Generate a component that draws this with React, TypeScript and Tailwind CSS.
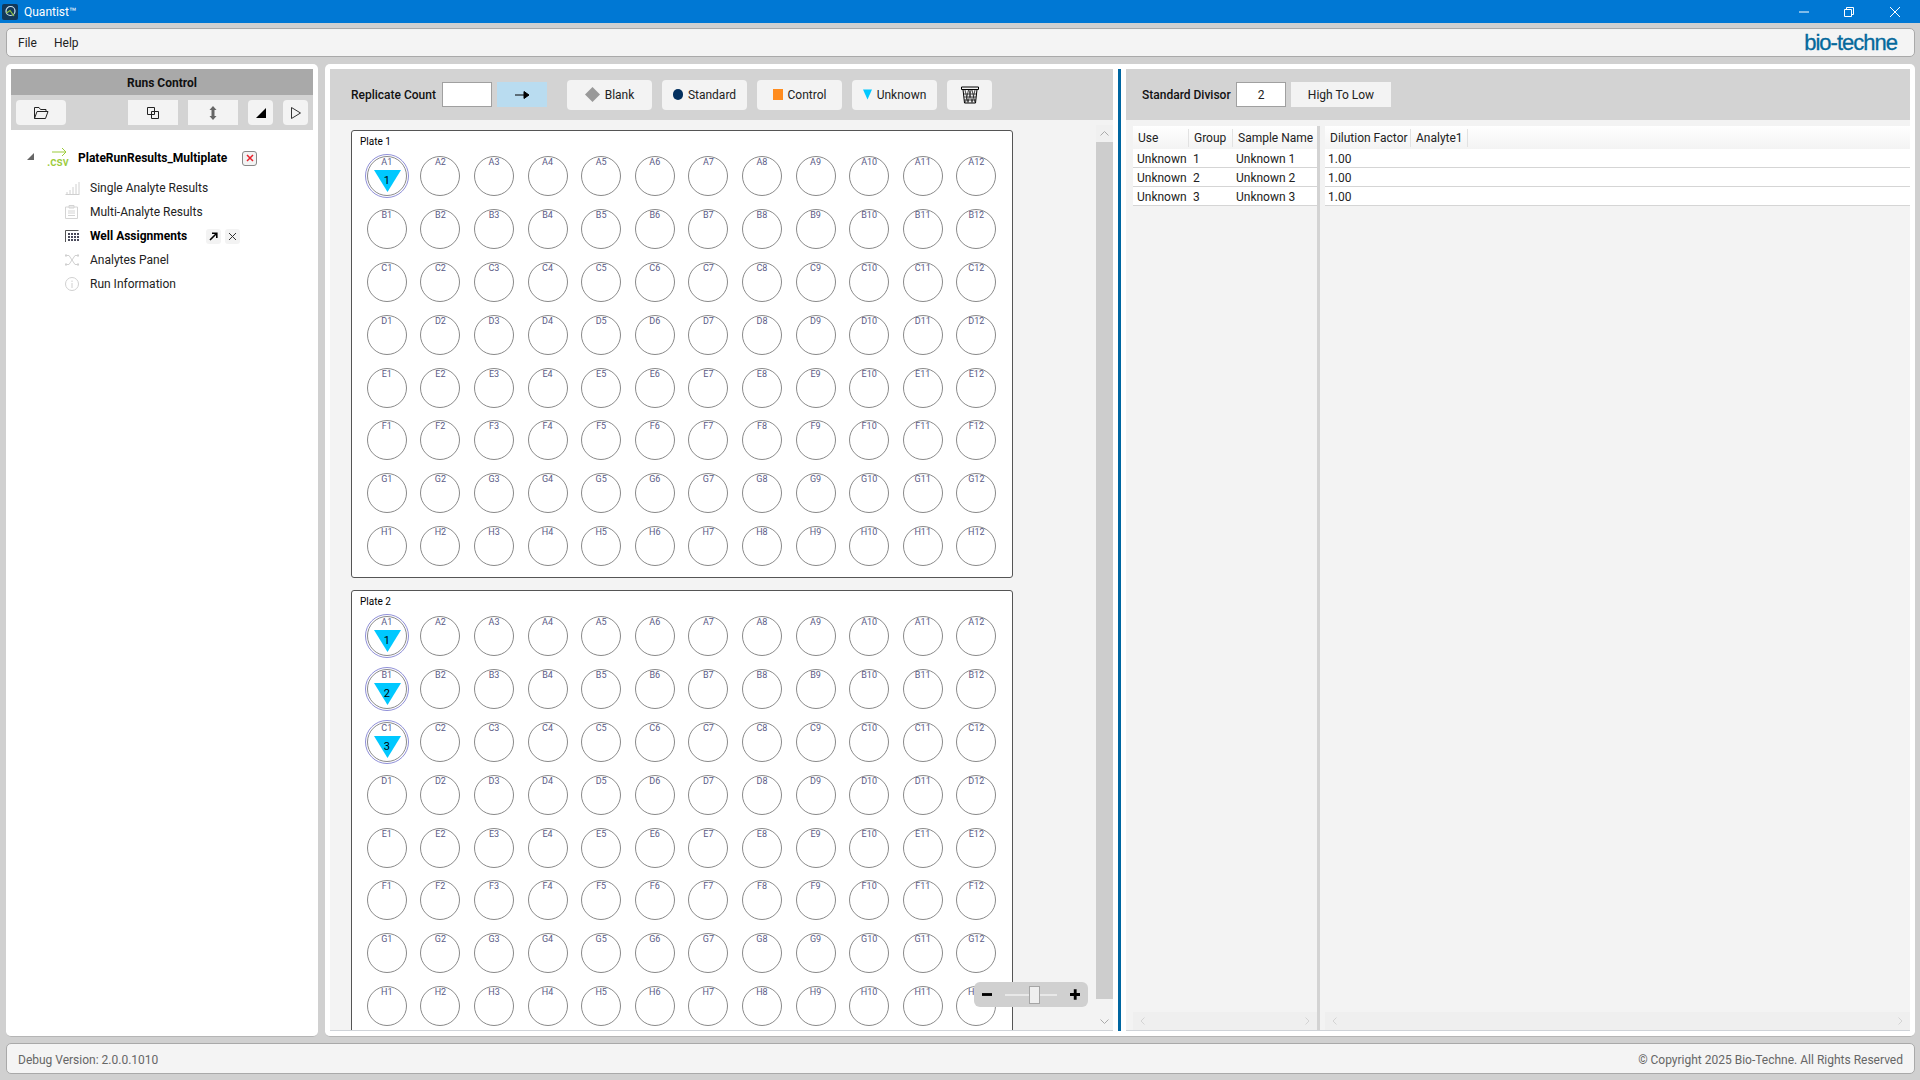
import { Fragment } from "react";

const rows = ["A", "B", "C", "D", "E", "F", "G", "H"];
const cols = [1, 2, 3, 4, 5, 6, 7, 8, 9, 10, 11, 12];

function Well({ label, sample }: { label: string; sample?: number }) {
  return (
    <div className="flex items-center justify-center">
      <div
        className={
          "relative flex h-[44px] w-[44px] items-center justify-center rounded-full border " +
          (sample ? "border-[#8f8fd8]" : "border-transparent")
        }
      >
        <div className="relative h-[40px] w-[40px] rounded-full border border-[#8a8a8a] bg-white">
          <div className="absolute inset-x-0 top-[0px] text-center text-[9px] leading-[11px] text-[#5a5a86]">
            {label}
          </div>
          {sample ? (
            <>
              <svg className="absolute left-[6px] top-[13px]" width="27" height="22" viewBox="0 0 27 22">
                <path d="M0 0H27L13.5 22Z" fill="#00c8ff" />
              </svg>
              <div className="absolute inset-x-0 top-[17px] text-center text-[11px] leading-[14px] text-black">
                {sample}
              </div>
            </>
          ) : null}
        </div>
      </div>
    </div>
  );
}

function Plate({ name, samples }: { name: string; samples: Record<string, number> }) {
  return (
    <div className="h-[448px] w-[662px] shrink-0 rounded-[3px] border border-[#555] bg-white">
      <div className="h-[19px] pl-[8px] pt-[4px] text-[10px] leading-[13px] text-black">{name}</div>
      <div className="ml-[8px] grid grid-cols-[repeat(12,53.6px)] auto-rows-[52.8px]">
        {rows.map((r) => (
          <Fragment key={r}>
            {cols.map((c) => (
              <Well key={r + c} label={r + c} sample={samples[r + c]} />
            ))}
          </Fragment>
        ))}
      </div>
    </div>
  );
}

function TypeButton({ icon, label }: { icon: React.ReactNode; label: string }) {
  return (
    <button className="flex h-[30px] w-[85px] items-center justify-center gap-[5px] rounded-[4px] bg-[#f3f3f3] text-[12px] text-[#222]">
      {icon}
      {label}
    </button>
  );
}

function TreeItem({ icon, label, active }: { icon: React.ReactNode; label: string; active?: boolean }) {
  return (
    <div className="flex h-[24px] items-center">
      <div className="flex w-[25px] justify-start">{icon}</div>
      <span className={active ? "w-[100px] font-bold text-black" : "text-[#222]"}>{label}</span>
      {active ? (
        <div className="ml-[16px] flex gap-[4px]">
          <span className="flex h-[15px] w-[15px] items-center justify-center rounded-[3px] bg-[#f3f3f3]">
            <svg width="9" height="9" viewBox="0 0 9 9">
              <path d="M1 8L7 2M3 1.2H7.8V6" fill="none" stroke="#000" strokeWidth="1.6" />
            </svg>
          </span>
          <span className="flex h-[15px] w-[15px] items-center justify-center rounded-[3px] bg-[#f3f3f3]">
            <svg width="9" height="9" viewBox="0 0 9 9">
              <path d="M1 1L8 8M8 1L1 8" fill="none" stroke="#333" strokeWidth="1" />
            </svg>
          </span>
        </div>
      ) : null}
    </div>
  );
}

function Chevrons() {
  return (
    <>
      <svg width="5" height="8" viewBox="0 0 5 8">
        <path d="M4.5 .5L1 4L4.5 7.5" fill="none" stroke="#d4d4d4" />
      </svg>
      <svg width="5" height="8" viewBox="0 0 5 8">
        <path d="M.5 .5L4 4L.5 7.5" fill="none" stroke="#d4d4d4" />
      </svg>
    </>
  );
}

export default function App() {
  const tableRows = [1, 2, 3];
  return (
    <div
      className="flex h-[1080px] w-[1920px] flex-col overflow-hidden bg-[#d0d0d0] text-[12px]"
      style={{ fontFamily: 'Roboto, "Noto Sans", sans-serif' }}
    >
      {/* title bar */}
      <div className="flex h-[23px] shrink-0 items-center bg-[#0078d4] text-white">
        <div className="ml-[2px] flex h-[16px] w-[16px] items-center justify-center rounded-[2px] bg-[#12395a]">
          <svg width="13" height="13" viewBox="0 0 13 13">
            <circle cx="6.5" cy="6" r="4.5" fill="none" stroke="#cfe3ee" strokeWidth="1.2" />
            <path d="M2.5 8L6 5.5L10 11" fill="none" stroke="#8fc43e" strokeWidth="1.2" />
          </svg>
        </div>
        <span className="ml-[6px]">Quantist™</span>
        <div className="ml-auto flex items-center">
          <svg className="mr-[35px]" width="10" height="10" viewBox="0 0 10 10">
            <path d="M0 5H10" stroke="#fff" />
          </svg>
          <svg className="mr-[36px]" width="10" height="10" viewBox="0 0 10 10">
            <path d="M.5 2.5H7.5V9.5H.5ZM2.5 2.5V.5H9.5V7.5H7.5" fill="none" stroke="#fff" />
          </svg>
          <svg className="mr-[20px]" width="10" height="10" viewBox="0 0 10 10">
            <path d="M0 0L10 10M10 0L0 10" stroke="#fff" />
          </svg>
        </div>
      </div>

      {/* menu */}
      <div className="ml-[6px] mr-[5px] mt-[5px] flex h-[29px] shrink-0 items-center rounded-[5px] border border-[#a9a9a9] bg-[#f4f4f4] pl-[11px] pr-[17px] pt-[1px] text-[#222]">
        <span className="w-[18px]">File</span>
        <span className="ml-[18px]">Help</span>
        <span
          className="ml-auto text-[22px] leading-none tracking-[-1px] text-[#05699c] [-webkit-text-stroke:0.3px_#05699c]"
          style={{ fontFamily: '"Liberation Sans", sans-serif' }}
        >
          bio-techne
        </span>
      </div>

      {/* main */}
      <div className="ml-[6px] mr-[5px] mt-[7px] flex min-h-0 flex-1 gap-[7px]">
        {/* runs control */}
        <div className="w-[312px] shrink-0 rounded-[5px] border-b border-[#b5b5b5] bg-white p-[5px]">
          <div className="flex h-[26px] items-center justify-center bg-[#a9a9a9] pt-[1px] font-bold text-[#111]">Runs Control</div>
          <div className="flex h-[35px] items-center gap-[10px] bg-[#d3d3d3] px-[5px]">
            <button className="flex h-[25px] w-[50px] items-center justify-center rounded-[4px] bg-[#f3f3f3]">
              <svg width="16" height="14" viewBox="0 0 16 14">
                <path d="M1.5 12.5V1.5H6L7.5 3.5H13V5.5M1.5 12.5H12.5L15 5.5H4Z" fill="none" stroke="#222" />
              </svg>
            </button>
            <div className="w-[42px]" />
            <button className="flex h-[25px] w-[50px] items-center justify-center bg-[#f3f3f3]">
              <svg width="12" height="12" viewBox="0 0 12 12">
                <path d="M.5.5H7.5V7.5H.5ZM4.5 4.5H11.5V11.5H4.5Z" fill="none" stroke="#222" />
              </svg>
            </button>
            <button className="flex h-[25px] w-[50px] items-center justify-center bg-[#f3f3f3]">
              <svg width="8" height="14" viewBox="0 0 8 14">
                <path d="M4 0L7.5 4H5.5V10H7.5L4 14L.5 10H2.5V4H.5Z" fill="#666" />
              </svg>
            </button>
            <button className="flex h-[25px] w-[25px] items-center justify-center rounded-[4px] bg-[#f3f3f3]">
              <svg width="10" height="10" viewBox="0 0 10 10">
                <path d="M10 0V10H0Z" fill="#000" />
              </svg>
            </button>
            <button className="flex h-[25px] w-[25px] items-center justify-center rounded-[4px] bg-[#f3f3f3]">
              <svg width="10" height="12" viewBox="0 0 10 12">
                <path d="M.5.5L9.5 6L.5 11.5Z" fill="none" stroke="#333" />
              </svg>
            </button>
          </div>

          {/* tree */}
          <div className="pl-[16px] pt-[13px]">
            <div className="flex h-[30px] items-center">
              <svg className="-mt-[4px]" width="7" height="7" viewBox="0 0 7 7">
                <path d="M7 0V7H0Z" fill="#666" />
              </svg>
              <div className="relative ml-[13px] h-[24px] w-[25px] shrink-0 text-[#9ccb3b]">
                <svg className="absolute left-[5px] top-[1px]" width="15" height="10" viewBox="0 0 15 10">
                  <path d="M0 5H14M10 1L14 5L10 9" fill="none" stroke="#9ccb3b" />
                </svg>
                <span className="absolute left-0 top-[9px] text-[12px] font-medium leading-[14px]">.csv</span>
              </div>
              <span className="ml-[6px] w-[154px] font-bold text-black">PlateRunResults_Multiplate</span>
              <span className="ml-[10px] flex h-[15px] w-[15px] items-center justify-center rounded-[3px] border border-[#888] bg-[#f3f3f3]">
                <svg width="8" height="8" viewBox="0 0 8 8">
                  <path d="M1 1L7 7M7 1L1 7" fill="none" stroke="#e8202a" strokeWidth="1.5" />
                </svg>
              </span>
            </div>
            <div className="ml-[38px] mt-[3px]">
              <TreeItem
                label="Single Analyte Results"
                icon={
                  <svg width="15" height="14" viewBox="0 0 15 14">
                    <path d="M.5 13.5H14.5M2 13V11M5 13V9M8 13V6M11 13V3M14 13V1" fill="none" stroke="#d0d0d0" />
                  </svg>
                }
              />
              <TreeItem
                label="Multi-Analyte Results"
                icon={
                  <svg width="13" height="14" viewBox="0 0 13 14">
                    <path d="M.5 2H12.5V13.5H.5ZM4 .5H9V3H4ZM3 6H10M3 8H10M3 10.5H10" fill="none" stroke="#d4d4d4" />
                  </svg>
                }
              />
              <TreeItem
                active
                label="Well Assignments"
                icon={
                  <svg width="14" height="13" viewBox="0 0 14 13">
                    <path d="M.5 12V.5H13.5" fill="none" stroke="#555" />
                    <path
                      d="M3 3H5V5H3ZM6 3H8V5H6ZM9 3H11V5H9ZM12 3H14V5H12ZM3 6H5V8H3ZM6 6H8V8H6ZM9 6H11V8H9ZM12 6H14V8H12ZM3 9H5V11H3ZM6 9H8V11H6ZM9 9H11V11H9ZM12 9H14V11H12Z"
                      fill="#4a4a5a"
                    />
                  </svg>
                }
              />
              <TreeItem
                label="Analytes Panel"
                icon={
                  <svg width="14" height="14" viewBox="0 0 14 14">
                    <path d="M1 2.5H4L10 11.5H13M1 11.5H4L10 2.5H13" fill="none" stroke="#d0d0d0" />
                    <path d="M0 1.5H2V3.5H0ZM12 1.5H14V3.5H12ZM0 10.5H2V12.5H0ZM12 10.5H14V12.5H12Z" fill="#d0d0d0" />
                  </svg>
                }
              />
              <TreeItem
                label="Run Information"
                icon={
                  <svg width="14" height="14" viewBox="0 0 14 14">
                    <circle cx="7" cy="7" r="6.5" fill="none" stroke="#d0d0d0" />
                    <path d="M7 6V11M7 3.5V5" stroke="#d0d0d0" />
                  </svg>
                }
              />
            </div>
          </div>
        </div>

        {/* workspace */}
        <div className="flex min-w-0 flex-1 rounded-[5px] border-b border-[#b5b5b5] bg-white p-[5px]">
          {/* plates column */}
          <div className="relative flex w-[783px] shrink-0 flex-col border-b border-[#cfd3d8]">
            <div className="flex h-[51px] shrink-0 items-center bg-[#d3d3d3] pl-[21px]">
              <span className="w-[91px] text-[12px] font-medium text-[#111]">Replicate Count</span>
              <div className="h-[25px] w-[50px] border border-[#a0a0a0] bg-white" />
              <button className="ml-[5px] flex h-[25px] w-[50px] items-center justify-center bg-[#b9dcf0]">
                <svg width="14" height="8" viewBox="0 0 14 8">
                  <path d="M0 4H10M9 0.5L14 4L9 7.5Z" fill="#000" stroke="#000" />
                </svg>
              </button>
              <div className="ml-[20px] flex gap-[10px]">
                <TypeButton
                  label="Blank"
                  icon={
                    <svg width="15" height="15" viewBox="0 0 14 14">
                      <path d="M7 0L14 7L7 14L0 7Z" fill="#999" />
                    </svg>
                  }
                />
                <TypeButton label="Standard" icon={<span className="h-[11px] w-[10px] rounded-full bg-[#03305f]" />} />
                <TypeButton label="Control" icon={<span className="h-[11px] w-[10px] bg-[#ff8c1e]" />} />
                <TypeButton
                  label="Unknown"
                  icon={
                    <svg width="9" height="11" viewBox="0 0 10 11">
                      <path d="M0 0H10L5 11Z" fill="#00c8ff" />
                    </svg>
                  }
                />
                <button className="flex h-[30px] w-[45px] items-center justify-center rounded-[4px] bg-[#f3f3f3]">
                  <svg width="18" height="18" viewBox="0 0 18 18">
                    <path d="M.5 1H17.5V3.5H.5ZM2 3.5L3.5 17H14.5L16 3.5" fill="none" stroke="#000" />
                    <path
                      d="M4 4L7 16.5M7.5 4L4.5 16.5M8 4L11 16.5M10 4L7 16.5M11 4L14 16.5M14 4L11 16.5M3 8H15M3 11H15M3 14H15"
                      fill="none"
                      stroke="#222"
                      strokeWidth=".8"
                    />
                  </svg>
                </button>
              </div>
            </div>
            <div className="flex min-h-0 flex-1 bg-[#f3f3f3]">
              <div className="flex min-w-0 flex-1 flex-col gap-[12px] overflow-hidden pl-[21px] pt-[10px]">
                <Plate name="Plate 1" samples={{ A1: 1 }} />
                <Plate name="Plate 2" samples={{ A1: 1, B1: 2, C1: 3 }} />
              </div>
              <div className="flex w-[17px] shrink-0 flex-col items-center pt-[5px]">
                <div className="flex h-[17px] w-full items-center justify-center bg-[#f0f0f0]">
                  <svg width="9" height="5" viewBox="0 0 9 5">
                    <path d="M.5 4.5L4.5 .5L8.5 4.5" fill="none" stroke="#aaa" />
                  </svg>
                </div>
                <div className="mb-[14px] w-full flex-1 bg-[#cdcdcd]" />
                <div className="flex h-[17px] w-full items-center justify-center">
                  <svg width="9" height="5" viewBox="0 0 9 5">
                    <path d="M.5 .5L4.5 4.5L8.5 .5" fill="none" stroke="#aaa" />
                  </svg>
                </div>
              </div>
            </div>
            {/* zoom slider */}
            <div className="absolute bottom-[23px] left-[644px] flex h-[25px] w-[114px] items-center rounded-[6px] bg-[#d0d0d0] px-[8px]">
              <svg width="11" height="3" viewBox="0 0 11 3">
                <path d="M0 0H11V3H0Z" fill="#000" />
              </svg>
              <div className="relative ml-[13px] h-[2px] w-[54px] bg-[#e8e8e8]">
                <div className="absolute left-[24px] top-[-8px] h-[18px] w-[11px] border border-[#a5a5a5] bg-[#efefef]" />
              </div>
              <svg className="ml-[13px]" width="11" height="11" viewBox="0 0 11 11">
                <path d="M4 0H7V4H11V7H7V11H4V7H0V4H4Z" fill="#000" />
              </svg>
            </div>
          </div>

          {/* splitter */}
          <div className="ml-[5px] w-[3px] shrink-0 bg-[#0066a1]" />

          {/* assignment table */}
          <div className="ml-[5px] flex min-w-0 flex-1 flex-col">
            <div className="flex h-[51px] shrink-0 items-center bg-[#d3d3d3] pl-[16px]">
              <span className="w-[94px] font-medium text-[#111]">Standard Divisor</span>
              <div className="flex h-[25px] w-[50px] items-center justify-center border border-[#a0a0a0] bg-white text-[#222]">
                2
              </div>
              <button className="ml-[5px] h-[25px] w-[100px] bg-[#f3f3f3] text-[#222]">High To Low</button>
            </div>
            <div className="flex min-h-0 flex-1 border-b border-[#cfd3d8] bg-[#f3f3f3] pl-[1px] pt-[6px] text-[#222]">
              <div className="flex w-[190px] shrink-0 flex-col">
                <div className="ml-[6px] flex h-[23px] items-center bg-gradient-to-b from-white to-[#f3f3f3] pt-[1px]">
                  <div className="w-[56px] border-r border-[#e2e2e2] pl-[5px]">Use</div>
                  <div className="w-[44px] border-r border-[#e2e2e2] pl-[5px]">Group</div>
                  <div className="w-[84px] pl-[5px]">Sample Name</div>
                </div>
                {tableRows.map((n) => (
                  <div key={n} className="ml-[6px] flex h-[19px] items-center border-b border-[#d5d5d5] bg-white pt-[2px]">
                    <div className="w-[56px] pl-[4px]">Unknown</div>
                    <div className="w-[44px] pl-[4px]">{n}</div>
                    <div className="w-[84px] pl-[3px]">Unknown {n}</div>
                  </div>
                ))}
                <div className="flex-1" />
                <div className="ml-[6px] flex h-[18px] items-center justify-between bg-[#efefef] px-[7px]">
                  <Chevrons />
                </div>
              </div>
              <div className="w-[3px] shrink-0 bg-[#d3d3d3]" />
              <div className="flex min-w-0 flex-1 flex-col pl-[5px]">
                <div className="flex h-[23px] items-center bg-gradient-to-b from-white to-[#f3f3f3] pt-[1px]">
                  <div className="w-[86px] border-r border-[#e2e2e2] pl-[5px]">Dilution Factor</div>
                  <div className="w-[57px] border-r border-[#e2e2e2] pl-[5px]">Analyte1</div>
                </div>
                {tableRows.map((n) => (
                  <div key={n} className="flex h-[19px] items-center border-b border-[#d5d5d5] bg-white pl-[3px] pt-[2px]">
                    1.00
                  </div>
                ))}
                <div className="flex-1" />
                <div className="flex h-[18px] items-center justify-between bg-[#efefef] px-[7px]">
                  <Chevrons />
                </div>
              </div>
            </div>
          </div>
        </div>
      </div>

      {/* status bar */}
      <div className="mb-[6px] ml-[6px] mr-[5px] mt-[6px] flex h-[31px] shrink-0 items-center justify-between rounded-[5px] border border-[#a9a9a9] bg-[#f4f4f4] px-[11px] pt-[2px] text-[#666]">
        <span>Debug Version: 2.0.0.1010</span>
        <span>© Copyright 2025 Bio-Techne. All Rights Reserved</span>
      </div>
    </div>
  );
}
